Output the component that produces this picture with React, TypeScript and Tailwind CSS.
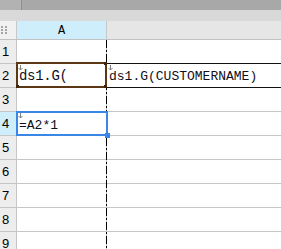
import React from 'react';

const rows = [1, 2, 3, 4, 5, 6, 7, 8, 9];

function Marker() {
  return (
    <svg className="absolute left-[1px] top-[1px] z-20" width="5" height="6" viewBox="0 0 5 6">
      <path d="M2.5 0 V5 M0.5 3 L2.5 5 L4.5 3" stroke="#808080" strokeWidth="1" fill="none" />
    </svg>
  );
}

export default function App() {
  return (
    <div className="relative w-[281px] h-[249px] overflow-hidden bg-white font-['Liberation_Mono',monospace] text-[13px] text-[#10101c]">
      {/* window strip */}
      <div className="h-[10px] bg-[#a8a8a8] flex">
        <div className="w-[22px] bg-[#b2b2b2] border-r border-[#8f8f8f]" />
      </div>
      <div className="h-[11px] bg-[#d9d9d9]" />

      {/* column header */}
      <div className="flex h-[19px] border-b border-[#c2c2c2]">
        <div className="w-[17px] shrink-0 bg-[#f1f1f1] border-r border-[#c8c8c8] flex items-center pl-[1px]">
          <div className="grid grid-cols-2 gap-x-[2px] gap-y-[1px]">
            {[0, 1, 2, 3, 4, 5].map((i) => (
              <div key={i} className="w-[2px] h-[2px] bg-[#a5a5a5]" />
            ))}
          </div>
        </div>
        <div className="w-[90px] shrink-0 bg-[#cdeefa] border-r border-[#c8c8c8] flex items-center justify-center text-[12px] pt-[2px] text-black">
          A
        </div>
        <div className="flex-1 bg-[#e6e6e6]" />
      </div>

      {/* rows */}
      {rows.map((r) => {
        const black = r === 1 || r === 2;
        return (
          <div key={r} className="flex h-[24px]">
            <div
              className={`w-[17px] shrink-0 border-r border-b border-[#c6c6c6] flex items-center pl-[2px] pt-[1px] font-['Liberation_Sans',sans-serif] text-[13px] text-black ${
                r === 4 ? 'bg-[#cdeefa]' : 'bg-[#ededed]'
              }`}
            >
              {r}
            </div>
            <div
              className={`relative w-[90px] shrink-0 border-r border-[#c6c6c6] border-b ${
                black ? 'border-b-[#111111]' : 'border-b-[#c6c6c6]'
              } flex items-center pl-[2px]`}
            >
              {r === 2 && (
                <>
                  <span className="pt-[2px] text-[14px] tracking-[-0.3px]">ds1.G(</span>
                  <div className="absolute z-10 left-[-1px] top-[-2px] w-[91px] h-[26px] border-2 border-[#5b3714]">
                    <div className="absolute left-[-2px] bottom-[-2px] w-[3px] h-[3px] bg-[#3f240a]" />
                    <div className="absolute right-[-2px] bottom-[-2px] w-[3px] h-[3px] bg-[#3f240a]" />
                    <div className="absolute right-[-2px] top-[-2px] w-[3px] h-[3px] bg-[#3f240a]" />
                  </div>
                  <Marker />
                </>
              )}
              {r === 4 && (
                <>
                  <span className="pt-[5px]">=A2*1</span>
                  <div className="absolute z-10 left-[-1px] top-[-1px] w-[92px] h-[25px] border-2 border-[#3a87e6]">
                    <div className="absolute right-[-4px] bottom-[-4px] w-[5px] h-[5px] bg-[#3a87e6]" />
                  </div>
                  <Marker />
                </>
              )}
            </div>
            <div
              className={`relative flex-1 border-b ${
                black ? 'border-[#111111]' : 'border-[#c6c6c6]'
              } flex items-center pl-[2px]`}
            >
              {r === 2 && (
                <>
                  <span className="pt-[2px] whitespace-nowrap">ds1.G(CUSTOMERNAME)</span>
                  <Marker />
                </>
              )}
            </div>
          </div>
        );
      })}

      {/* page break line */}
      <div className="absolute left-[106px] top-[40px] w-[1px] h-[209px] bg-[repeating-linear-gradient(to_bottom,#000_0_8px,transparent_8px_10px,#000_10px_12px,transparent_12px_14px)]" />
    </div>
  );
}
